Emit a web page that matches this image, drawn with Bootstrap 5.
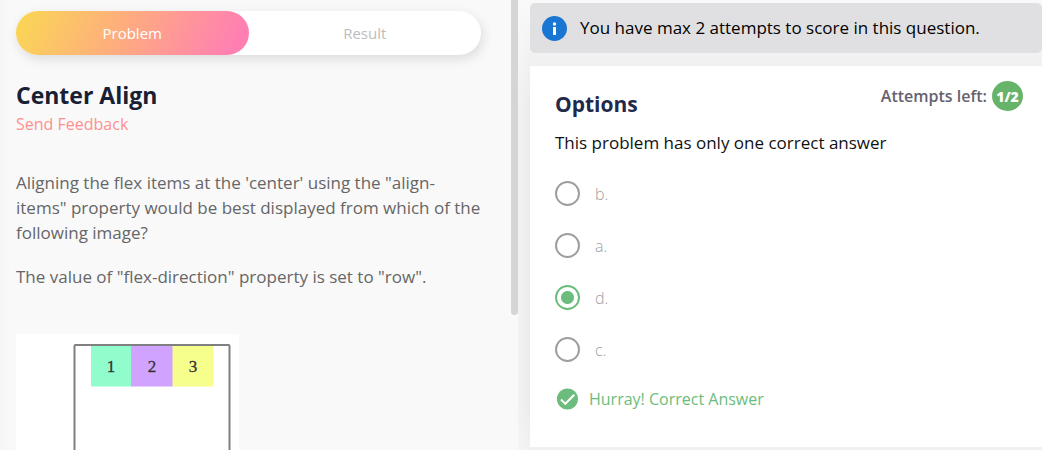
<!DOCTYPE html>
<html lang="en">
<head>
<meta charset="utf-8">
<meta name="viewport" content="width=device-width, initial-scale=1">
<title>Center Align</title>
<link href="https://cdn.jsdelivr.net/npm/bootstrap@5.3.0/dist/css/bootstrap.min.css" rel="stylesheet">
<style>
  body { font-family: "Open Sans", Lato, sans-serif; background: #f9f9f9; color: #111; }
  .problem-pane { flex: 0 1 518px; background: linear-gradient(90deg, #f5f5f5, #f9f9f9 10px); }
  .problem-body { padding: 11px 30px 0 16px; }
  .scroll-thumb { width: 7px; height: 70%; background: #d5d5d5; border-radius: 0 0 4px 4px; }
  .tab-switch { background: #fff; border-radius: 22px; box-shadow: 2px 4px 12px rgba(0,0,0,.12); }
  .tab-switch .btn { height: 44px; border: 0; border-radius: 22px; font-size: 15px; color: #bdbdbd; }
  .tab-switch .btn.active { color: #fff; background: linear-gradient(114deg, #fad853, #fead7e 45%, #ff7fb3 93%); }
  .title { font-size: 23px; line-height: 30px; font-weight: 700; color: #172035; margin-top: 25px; }
  .feedback { font-size: 16px; line-height: 24px; font-weight: 500; color: #ff9090; margin-top: 2px; }
  .statement { font-size: 17px; line-height: 25px; color: #666; margin-top: 34px; }
  .statement p { margin-bottom: 19px; }
  .figure-box { width: 223px; height: 200px; margin-top: 45px; }
  .answer-pane { min-width: 0; padding: 3px 0 4px 12px; background: linear-gradient(90deg, rgba(249,249,249,.5), rgba(249,249,249,0) 12px), linear-gradient(#f9f9f9, #ebebeb 110px, #ebebeb 400px, #f1f1f1); }
  .notice { height: 50px; padding: 0 12px; gap: 13px; background: #e0e0e2; border-radius: 5px; font-size: 17px; font-weight: 500; color: #000; }
  .options-card { margin-top: 13px; padding: 15px 19px 36px 25px; background: #fff; }
  .options-title { font-size: 21px; line-height: 28px; font-weight: 700; color: #1f2a4b; margin-top: 9px; }
  .attempts { font-size: 16px; font-weight: 600; color: #65616f; gap: 5px; }
  .count { width: 31px; height: 30px; border-radius: 50%; background: #66b36a; color: #fff; font-size: 14px; font-weight: 800; }
  .hint { font-size: 17px; line-height: 26px; margin-top: 12px; }
  .choices { margin-top: 25px; gap: 27px; }
  .choice { height: 25px; gap: 15px; }
  .choice .form-check-input { width: 25px; height: 25px; margin: 0; border: 2px solid #9e9e9e; background: #fff; box-shadow: none; }
  .choice .form-check-input:checked { border-color: #6cbd7d; background: radial-gradient(circle, #6cbd7d 6px, #fff 7px); }
  .choice label { font-size: 16px; font-weight: 300; color: #a0a0a0; }
  .verdict { font-size: 16px; line-height: 24px; color: #6cbd7d; gap: 10px; margin-top: 25px; padding-left: 1px; }
</style>
</head>
<body>
<main class="d-flex vh-100 overflow-hidden">
  <section class="problem-pane d-flex overflow-hidden">
    <div class="problem-body flex-grow-1">
      <div class="tab-switch d-flex">
        <button type="button" class="btn active w-50">Problem</button>
        <button type="button" class="btn w-50">Result</button>
      </div>
      <h1 class="title mb-0">Center Align</h1>
      <a href="#" class="feedback d-block text-decoration-none">Send Feedback</a>
      <div class="statement">
        <p>Aligning the flex items at the 'center' using the "align-items" property would be best displayed from which of the following image?</p>
        <p>The value of "flex-direction" property is set to "row".</p>
      </div>
      <svg class="figure-box d-block" viewBox="0 0 223 200" role="img" aria-label="Flex container with three items">
        <rect width="223" height="200" fill="#fff"/>
        <rect x="58.5" y="11" width="155" height="240" rx="1" fill="#fff" stroke="#808080" stroke-width="2"/>
        <rect x="75" y="12" width="41" height="40.500" fill="#91fdcc"/>
        <rect x="115" y="12" width="42" height="40.500" fill="#cfa3ff"/>
        <rect x="156.500" y="12" width="41" height="40.500" fill="#f6ff8b"/>
        <g font-family="Liberation Serif, serif" font-size="17" fill="#333" stroke="#333" stroke-width=".3" text-anchor="middle">
          <text x="95" y="38">1</text><text x="136" y="38">2</text><text x="177" y="38">3</text>
        </g>
      </svg>
    </div>
    <div class="scroll-thumb flex-shrink-0"></div>
  </section>
  <section class="answer-pane flex-grow-1">
    <div class="notice d-flex align-items-center">
      <svg class="flex-shrink-0" width="25" height="25" viewBox="0 0 25 25" aria-hidden="true"><circle cx="12.500" cy="12.500" r="12.500" fill="#1976d2"/><circle cx="12.500" cy="8" r="1.700" fill="#fff"/><path d="M11 11h3v8h-3z" fill="#fff"/></svg>
      <span>You have max 2 attempts to score in this question.</span>
    </div>
    <div class="options-card">
      <div class="d-flex justify-content-between align-items-start">
        <h2 class="options-title mb-0">Options</h2>
        <div class="attempts d-flex align-items-center"><span>Attempts left:</span><span class="count d-flex align-items-center justify-content-center">1/2</span></div>
      </div>
      <p class="hint mb-0">This problem has only one correct answer</p>
      <div class="choices d-flex flex-column">
        <div class="choice d-flex align-items-center"><input class="form-check-input" type="radio" name="answer" id="opt-b"><label for="opt-b">b.</label></div>
        <div class="choice d-flex align-items-center"><input class="form-check-input" type="radio" name="answer" id="opt-a"><label for="opt-a">a.</label></div>
        <div class="choice d-flex align-items-center"><input class="form-check-input" type="radio" name="answer" id="opt-d" checked><label for="opt-d">d.</label></div>
        <div class="choice d-flex align-items-center"><input class="form-check-input" type="radio" name="answer" id="opt-c"><label for="opt-c">c.</label></div>
      </div>
      <div class="verdict d-flex align-items-center">
        <svg width="23" height="22" viewBox="0 0 23 22" aria-hidden="true"><circle cx="11.500" cy="11" r="10.600" fill="#6cbd7d"/><path d="M5 11.500l4.300 4.300L18.300 6.800" fill="none" stroke="#fff" stroke-width="2"/></svg>
        <span>Hurray! Correct Answer</span>
      </div>
    </div>
  </section>
</main>
<script src="https://cdn.jsdelivr.net/npm/bootstrap@5.3.0/dist/js/bootstrap.bundle.min.js"></script>
</body>
</html>
